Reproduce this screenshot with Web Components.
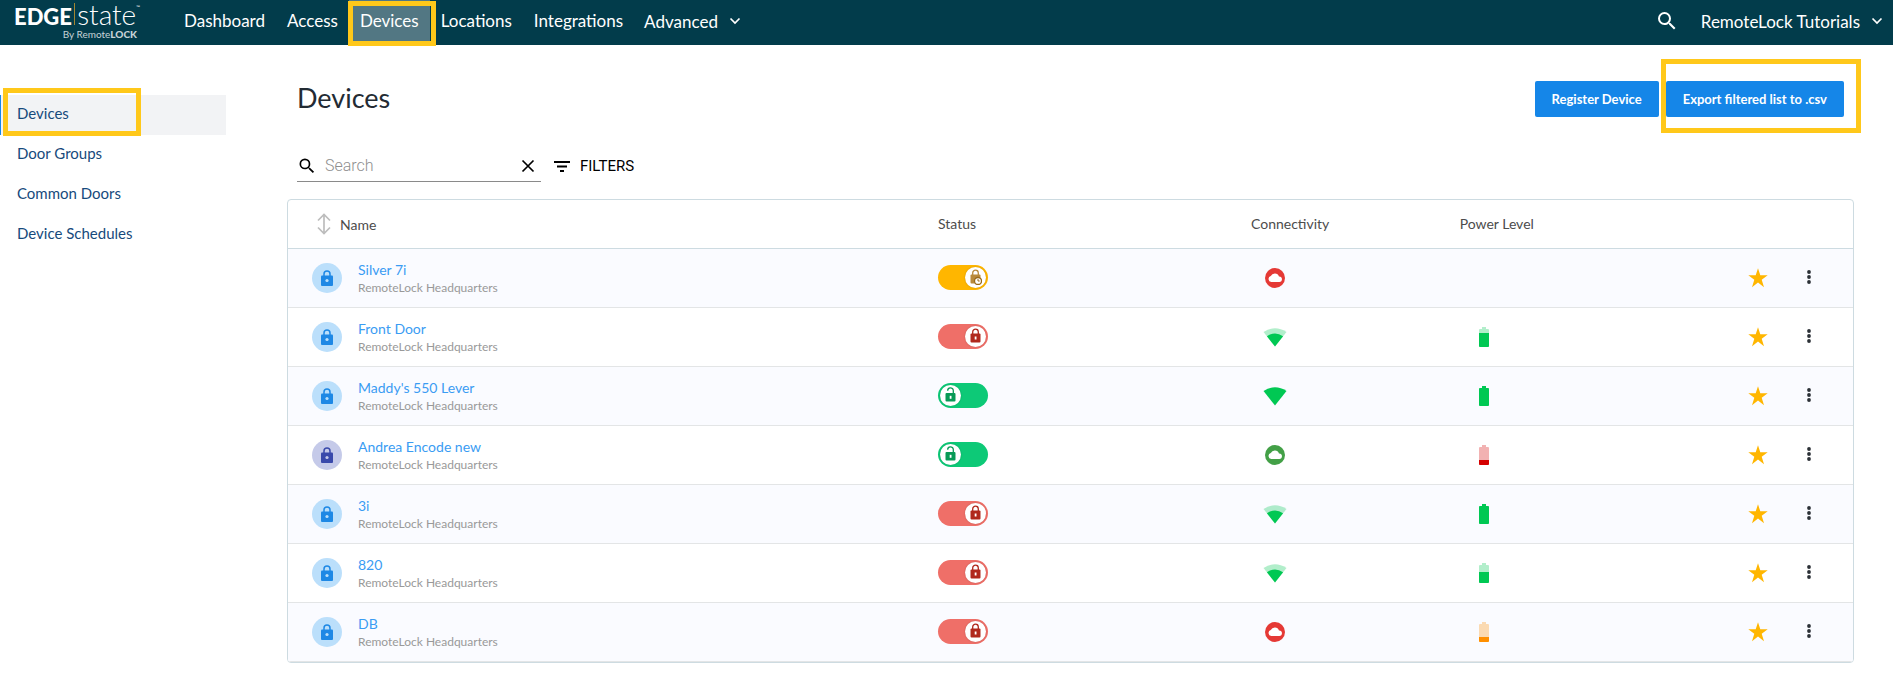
<!DOCTYPE html>
<html lang="en">
<head>
<meta charset="utf-8">
<meta name="viewport" content="width=device-width, initial-scale=1">
<title>Devices</title>
<style>
  body { margin: 0; background: #fff; color: #232b33; font-family: Lato, "Open Sans", sans-serif; font-size: 14px; }
  .page { display: flex; align-items: flex-start; }
  side-nav { flex: none; width: 226px; margin-top: 50px; }
  main { flex: 1; min-width: 0; padding: 36px 39px 24px 61px; }
</style>
</head>
<body>
<top-bar>
  <brand-logo slot="brand"></brand-logo>
  <nav-link href="#dashboard">Dashboard</nav-link>
  <nav-link href="#access">Access</nav-link>
  <nav-link href="#devices" active>Devices</nav-link>
  <nav-link href="#locations">Locations</nav-link>
  <nav-link href="#integrations">Integrations</nav-link>
  <nav-menu>Advanced</nav-menu>
  <nav-menu slot="account">RemoteLock Tutorials</nav-menu>
</top-bar>
<div class="page">
  <side-nav>
    <side-link href="#devices" active>Devices</side-link>
    <side-link href="#door-groups">Door Groups</side-link>
    <side-link href="#common-doors">Common Doors</side-link>
    <side-link href="#device-schedules">Device Schedules</side-link>
  </side-nav>
  <main>
    <page-heading>
      Devices
      <action-button slot="actions">Register Device</action-button>
      <action-button slot="actions" marked>Export filtered list to .csv</action-button>
    </page-heading>
    <filter-bar></filter-bar>
    <device-table></device-table>
  </main>
</div>
<script>
const component = (name, html, setup) => customElements.define(name, class extends HTMLElement {
  connectedCallback() {
    if (this.shadowRoot) return;
    const template = document.createElement('template');
    template.innerHTML = html;
    this.attachShadow({ mode: 'open' }).append(template.content.cloneNode(true));
    if (setup) setup(this, this.shadowRoot);
  }
});

const glyphs = {
  search: '<svg width="24" height="24" viewBox="0 0 24 24" fill="currentColor"><path d="M15.5 14h-.79l-.28-.27A6.47 6.47 0 0 0 16 9.5 6.5 6.5 0 1 0 9.5 16c1.61 0 3.09-.59 4.23-1.57l.27.28v.79l5 4.99L20.49 19l-4.99-5zm-6 0a4.5 4.5 0 1 1 0-9 4.5 4.5 0 0 1 0 9z"/></svg>',
  chevron: '<svg width="12" height="12" viewBox="0 0 12 12" fill="none" stroke="currentColor" stroke-width="1.7"><path d="M1.5 3.5 6 8l4.500-4.500"/></svg>',
  close: '<svg width="14" height="14" viewBox="0 0 14 14" fill="none" stroke="currentColor" stroke-width="1.7"><path d="M1.500 1.500l11 11M12.500 1.500l-11 11"/></svg>',
  filter: '<svg width="16" height="12" viewBox="0 0 16 12" fill="currentColor"><path d="M0 1h16v2H0zM3 5.500h10v2H3zM6 10h4v2H6z"/></svg>',
  sort: '<svg width="14" height="22" viewBox="0 0 14 22" fill="none" stroke="#bdbdbd" stroke-width="1.7"><path d="M7 2v18M1 7.500 7 1.500l6 6M1 14.500l6 6 6-6"/></svg>',
  star: '<svg width="20" height="20" viewBox="0 0 20 20" fill="#ffb600"><path d="M10 .3l2.300 7h7.400l-6 4.400 2.300 7.500-6-4.600-6 4.600 2.300-7.500-6-4.400h7.400z"/></svg>',
  dots: '<svg width="4" height="16" viewBox="0 0 4 16" fill="#2b3036"><circle cx="2" cy="3" r="1.900"/><circle cx="2" cy="8" r="1.900"/><circle cx="2" cy="13" r="1.900"/></svg>',
  lock: '<svg width="12" height="16" viewBox="0 0 12 16"><path d="M3 6V4a3 3 0 0 1 6 0v2" fill="none" stroke="currentColor" stroke-width="1.500"/><rect y="5.500" width="12" height="10.500" rx="1" fill="currentColor"/><circle cx="6" cy="10.500" r="1.600" fill="var(--hole)"/></svg>'
};

/* Outline that calls attention to the element it is placed in. */
component('callout-frame', `
  <style>:host { display: block; position: absolute; box-sizing: border-box; border: 5px solid #ffc81a; pointer-events: none; z-index: 2; }</style>`);

component('brand-logo', `
  <style>
    :host { display: block; width: 126px; color: #fff; }
    a { display: block; color: inherit; text-decoration: none; }
    .mark { display: flex; align-items: baseline; height: 28px; line-height: 28px; }
    b { font-size: 22px; font-weight: 900; }
    i { align-self: center; width: 2px; height: 22px; margin: 0 2px; background: #a18632; }
    .state { font-size: 28px; font-weight: 300; }
    sup { font-size: 5px; line-height: 5px; align-self: flex-start; margin-top: 5px; }
    .by { height: 12px; padding-right: 3px; font-size: 10px; line-height: 12px; text-align: right; color: #c6d3d7; }
    .by strong { font-weight: 900; }
  </style>
  <a href="#home" aria-label="EDGEstate by RemoteLOCK">
    <div class="mark"><b>EDGE</b><i></i><span class="state">state</span><sup>™</sup></div>
    <div class="by">By Remote<strong>LOCK</strong></div>
  </a>`);

component('top-bar', `
  <style>
    :host { display: block; background: #023c4b; color: #fff; font-size: 17px; }
    header { display: flex; align-items: stretch; height: 45px; padding: 0 0 0 14px; }
    nav { display: flex; margin-left: 33px; }
    .end { display: flex; align-items: stretch; margin-left: auto; }
    button { display: flex; align-items: center; border: 0; padding: 0 12px 3px; background: none; color: inherit; }
  </style>
  <header>
    <slot name="brand"></slot>
    <nav aria-label="Main"><slot></slot></nav>
    <div class="end"><button type="button" aria-label="Search">${glyphs.search}</button><slot name="account"></slot></div>
  </header>`);

component('nav-link', `
  <style>
    :host { display: block; position: relative; }
    a { display: block; padding: 0 11px; color: inherit; text-decoration: none; line-height: 42px; height: 45px; }
    :host([active]) a { background: #527783; }
    callout-frame { inset: 1px -6px -1px -1px; }
  </style>
  <a><slot></slot></a>`, (host, root) => {
    root.querySelector('a').href = host.getAttribute('href');
    if (host.hasAttribute('active')) {
      root.querySelector('a').setAttribute('aria-current', 'page');
      root.append(document.createElement('callout-frame'));
    }
  });

component('nav-menu', `
  <style>
    :host { display: flex; }
    button { display: flex; align-items: center; gap: 11px; height: 43px; border: 0; padding: 0 10px; background: none; color: inherit; font: inherit; }
    svg { margin-top: -2px; }
  </style>
  <button type="button" aria-haspopup="menu"><span><slot></slot></span>${glyphs.chevron}</button>`);

component('side-nav', `
  <style>:host { display: block; color: #164a7c; font-size: 15px; } nav { display: grid; }</style>
  <nav aria-label="Devices"><slot></slot></nav>`);

component('side-link', `
  <style>
    :host { display: block; position: relative; }
    a { display: block; box-sizing: border-box; height: 40px; padding-left: 16px; border-left: 1px solid transparent; line-height: 37px; color: inherit; text-decoration: none; }
    :host([active]) a { background: #f2f3f5; border-color: #1586e8; }
    callout-frame { inset: -7px 85px -1px 3px; }
  </style>
  <a><slot></slot></a>`, (host, root) => {
    root.querySelector('a').href = host.getAttribute('href');
    if (host.hasAttribute('active')) {
      root.querySelector('a').setAttribute('aria-current', 'page');
      root.append(document.createElement('callout-frame'));
    }
  });

component('page-heading', `
  <style>
    :host { display: flex; align-items: center; justify-content: space-between; padding: 0 10px; }
    h1 { margin: 0; font-size: 27px; line-height: 34px; padding-bottom: 2px; font-weight: 400; }
    .actions { display: flex; gap: 7px; }
  </style>
  <h1><slot></slot></h1><div class="actions"><slot name="actions"></slot></div>`);

component('action-button', `
  <style>
    :host { display: block; position: relative; }
    button { height: 36px; padding: 0 17px; border: 0; border-radius: 2px; background: #1586e8; color: #fff; font: 700 13px/36px Lato, sans-serif; }
    callout-frame { inset: -22px -17px -16px -5px; }
  </style>
  <button type="button"><slot></slot></button>`, (host, root) => {
    if (host.hasAttribute('marked')) root.append(document.createElement('callout-frame'));
  });

component('filter-bar', `
  <style>
    :host { display: flex; align-items: center; margin: 33px 10px 17px; color: #000; font-family: Roboto, sans-serif; }
    .search { display: flex; align-items: center; box-sizing: border-box; width: 244px; height: 32px; border-bottom: 1px solid #8a8a8a; }
    label { display: flex; }
    label svg { width: 20px; height: 20px; }
    input { flex: 1; min-width: 0; margin-left: 8px; border: 0; padding: 0; outline: 0; background: none; color: #222; font: 300 16px/24px Roboto, sans-serif; }
    input::placeholder { color: #8f8f8f; opacity: 1; }
    button { display: flex; align-items: center; border: 0; padding: 0; background: none; color: inherit; }
    .clear { padding: 0 6px; }
    .filters { gap: 10px; margin-left: 13px; font: 400 15px/20px Roboto, sans-serif; }
  </style>
  <div class="search" role="search">
    <label for="q" aria-label="Search devices">${glyphs.search}</label>
    <input id="q" type="text" placeholder="Search">
    <button class="clear" type="button" aria-label="Clear">${glyphs.close}</button>
  </div>
  <button class="filters" type="button">${glyphs.filter}<span>FILTERS</span></button>`);

component('device-badge', `
  <style>
    :host { display: flex; align-items: center; justify-content: center; flex: none; width: 30px; height: 30px; border-radius: 50%; background: #bbdffb; color: #1e88e5; --hole: #bbdffb; }
    :host([tone=indigo]) { background: #c5cae9; color: #3949ab; --hole: #c5cae9; }
  </style>${glyphs.lock}`);

/* Lock switch; state is "locked", "unlocked" or "scheduled". */
const padlocks = {
  locked: '<path d="M2.700 6V4a2.800 2.800 0 0 1 5.600 0v2" fill="none" stroke="#b0281c" stroke-width="1.300"/><rect x=".5" y="5.500" width="10" height="9" rx="1" fill="#b0281c"/><rect x="4.700" y="8.500" width="1.800" height="3" fill="#fff"/>',
  unlocked: '<path d="M2.700 3.800A2.700 2.700 0 0 1 8.300 3.500V6" fill="none" stroke="#089a56" stroke-width="1.300"/><rect x=".5" y="6" width="10" height="8.500" rx="1" fill="#089a56"/><rect x="4.700" y="8.800" width="1.800" height="3" fill="#fff"/>',
  scheduled: '<path d="M2.700 6V4a2.800 2.800 0 0 1 5.600 0v2" fill="none" stroke="#b98a3c" stroke-width="1.300"/><rect x=".5" y="5.500" width="10" height="9" rx="1" fill="#b98a3c"/><circle cx="8" cy="12" r="3.500" fill="#fff" stroke="#98691c" stroke-width="1.300"/><path d="M8 10v2h1.700" fill="none" stroke="#98691c"/>'
};
component('lock-switch', `
  <style>
    :host { display: block; height: 27px; }
    label { display: grid; align-items: center; width: 50px; height: 25px; }
    input { grid-area: 1 / 1; appearance: none; margin: 0; width: 50px; height: 25px; border-radius: 13px; background: #ef6f68; }
    .knob { grid-area: 1 / 1; z-index: 1; display: flex; align-items: center; justify-content: center; justify-self: end; width: 21px; height: 21px; margin: 0 2px; border-radius: 50%; background: #fff; box-shadow: 0 0 2px #0003; }
    :host([state=unlocked]) input { background: #0dc977; }
    :host([state=unlocked]) .knob { justify-self: start; }
    :host([state=scheduled]) input { background: #ffb600; }
  </style>
  <label><input type="checkbox" role="switch" aria-label="Locked"><span class="knob"></span></label>`, (host, root) => {
    const state = host.getAttribute('state');
    root.querySelector('input').checked = state !== 'unlocked';
    root.querySelector('.knob').innerHTML = `<svg width="12" height="16" viewBox="0 0 12 16">${padlocks[state]}</svg>`;
  });

/* Connectivity: "full" or "medium" wifi, or "online" / "offline" cloud. */
component('signal-icon', `
  <style>:host { display: flex; align-items: center; justify-content: center; width: 48px; height: 24px; }</style>`, (host, root) => {
    const level = host.getAttribute('level');
    const cloud = fill => `<svg width="20" height="20" viewBox="0 0 20 20"><circle cx="10" cy="10" r="10" fill="${fill}"/><path d="M6.300 14a3 3 0 0 1-.5-5.900A4.400 4.400 0 0 1 14 8.400 2.800 2.800 0 0 1 14.300 14z" fill="#fff"/></svg>`;
    const wifi = inner => `<svg width="24" height="20" viewBox="0 0 24 20"><path d="M12 19.500.5 5Q12-2.500 23.500 5z" fill="#00c853" ${inner ? 'fill-opacity=".3"' : ''}/>${inner ? '<path d="M12 19.500 3.900 9.200Q12 3.600 20.100 9.200z" fill="#00c853"/>' : ''}</svg>`;
    root.innerHTML += { full: wifi(false), medium: wifi(true), online: cloud('#43a047'), offline: cloud('#e53935') }[level];
  });

/* Battery glyph; charge is the filled height in px out of 20. */
component('battery-icon', `
  <style>:host { display: flex; align-items: center; justify-content: center; width: 48px; height: 24px; }</style>`, (host, root) => {
    const charge = +host.getAttribute('charge');
    const fill = charge > 5 ? '#00c853' : host.getAttribute('tone');
    const shape = 'M3 0h4v2h2q1 0 1 1v16q0 1-1 1H1q-1 0-1-1V3q0-1 1-1h2z';
    root.innerHTML += `<svg width="10" height="20" viewBox="0 0 10 20"><clipPath id="c"><path d="M0 ${20 - charge}h10v${charge}H0z"/></clipPath><path d="${shape}" fill="${fill}" fill-opacity=".3"/><path d="${shape}" fill="${fill}" clip-path="url(#c)"/></svg>`;
  });

const site = 'RemoteLock Headquarters';
const devices = [
  { name: 'Silver 7i', state: 'scheduled', signal: 'offline' },
  { name: 'Front Door', state: 'locked', signal: 'medium', charge: 14 },
  { name: "Maddy's 550 Lever", state: 'unlocked', signal: 'full', charge: 20 },
  { name: 'Andrea Encode new', state: 'unlocked', signal: 'online', charge: 5, alert: '#d50000', tone: 'indigo' },
  { name: '3i', state: 'locked', signal: 'medium', charge: 20 },
  { name: '820', state: 'locked', signal: 'medium', charge: 11 },
  { name: 'DB', state: 'locked', signal: 'offline', charge: 5, alert: '#ff8f00' }
];
const row = d => `
  <tr>
    <td><div class="device"><device-badge tone="${d.tone || 'blue'}"></device-badge><div class="label"><a href="#device">${d.name}</a><small>${site}</small></div></div></td>
    <td><lock-switch state="${d.state}"></lock-switch></td>
    <td><signal-icon level="${d.signal}"></signal-icon></td>
    <td>${d.charge ? `<battery-icon charge="${d.charge}" tone="${d.alert || ''}"></battery-icon>` : ''}</td>
    <td><div class="tools"><button type="button" aria-label="Favourite">${glyphs.star}</button><button class="more" type="button" aria-label="More">${glyphs.dots}</button></div></td>
  </tr>`;
component('device-table', `
  <style>
    :host { display: block; border: 1px solid #cddbe1; border-radius: 4px; overflow: hidden; }
    table { width: 100%; table-layout: fixed; border-collapse: separate; border-spacing: 0; }
    th, td { box-sizing: border-box; padding: 0 24px; text-align: left; }
    th { height: 49px; padding-bottom: 2px; border-bottom: 1px solid #cddbe1; color: #4c4c4c; font-size: 14px; font-weight: 400; }
    td { height: 59px; border-bottom: 1px solid #e3e5e6; }
    tbody tr:nth-child(odd) { background: #fafbff; }
    th button { display: flex; align-items: center; gap: 9px; margin-left: 5px; border: 0; padding: 2px 0 0; background: none; color: inherit; font: inherit; }
    .device { display: flex; align-items: center; gap: 16px; }
    .label { padding-top: 2px; }
    a { display: block; color: #3a9cf3; text-decoration: none; font-size: 14px; line-height: 18px; }
    small { display: block; color: #999; font-size: 12px; line-height: 18px; }
    .tools { display: flex; justify-content: flex-end; align-items: center; gap: 29px; padding-right: 9px; }
    .tools button { display: flex; justify-content: center; border: 0; padding: 0; width: 22px; background: none; }
    .tools .more { padding-bottom: 2px; }
    .c1 { width: 40%; } .c2 { width: 20%; } .c3 { width: 13.333%; } .c4 { width: 13.333%; }
  </style>
  <table>
    <colgroup><col class="c1"><col class="c2"><col class="c3"><col class="c4"><col></colgroup>
    <thead><tr><th><button type="button">${glyphs.sort}Name</button></th><th>Status</th><th>Connectivity</th><th>Power Level</th><th aria-label="Actions"></th></tr></thead>
    <tbody>${devices.map(row).join('')}</tbody>
  </table>`);
</script>
</body>
</html>
